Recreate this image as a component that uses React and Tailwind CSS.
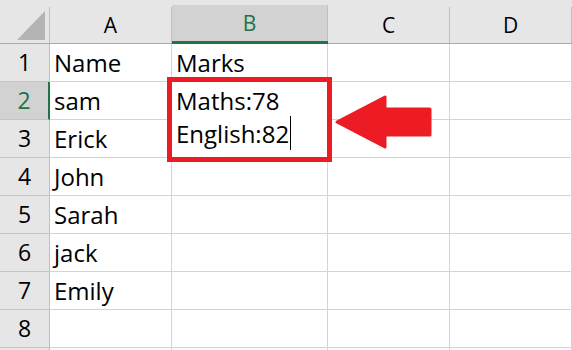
import React from "react";

const columns = [
  { label: "A", width: "w-[122px]" },
  { label: "B", width: "w-[156px]", active: true },
  { label: "C", width: "w-[122px]" },
  { label: "D", width: "flex-1" },
];

// the last row only peeks in at the bottom edge, so its number stays hidden
const rows = [
  { n: 1, a: "Name", b: "Marks" },
  { n: 2, a: "sam", b: "" },
  { n: 3, a: "Erick", b: "" },
  { n: 4, a: "John", b: "" },
  { n: 5, a: "Sarah", b: "" },
  { n: 6, a: "jack", b: "" },
  { n: 7, a: "Emily", b: "" },
  { n: 8, a: "", b: "" },
  { n: "", a: "", b: "" },
];

function CornerCell() {
  return (
    <div className="w-[50px] h-full flex flex-col border-b border-[#ababab]">
      <div className="h-[7px]" />
      <div className="flex-1 border-r border-[#bfbfbf] relative">
        <svg width="49" height="36" className="absolute left-0 top-0">
          <polygon points="17,33 45,33 45,4" fill="#b4b4b4" />
        </svg>
      </div>
    </div>
  );
}

function ColumnHeader({ label, width, active }) {
  return (
    <div
      className={`${width} h-full flex flex-col ${
        active ? "border-b-[3px] border-[#217346]" : "border-b border-[#ababab]"
      }`}
    >
      <div className="h-[7px]" />
      <div
        className={`flex-1 border-r border-[#bfbfbf] text-center text-[21px] leading-[36px] ${
          active ? "bg-[#d2d2d2] text-[#217346]" : "text-black"
        }`}
      >
        {label}
      </div>
    </div>
  );
}

function EditBox() {
  return (
    <div className="absolute left-[167px] top-[77px] w-[165px] h-[85px] border-[5px] border-[#ed1c24] bg-white pl-[4px] pt-[3px] text-[24px] leading-[31px] text-black">
      <div>Maths:78</div>
      <div className="flex items-center">
        <span>English:82</span>
        <span className="ml-[1px] w-px h-[34px] bg-black" />
      </div>
    </div>
  );
}

function Arrow() {
  return (
    <svg width="100" height="58" className="absolute left-[334px] top-[94px]">
      <polygon
        points="3,28 51,3 51,15 96,15 96,41 51,41 51,53"
        fill="#ed1c24"
        stroke="#ed1c24"
        strokeWidth="3"
        strokeLinejoin="round"
      />
    </svg>
  );
}

export default function App() {
  return (
    <div className="relative w-[572px] h-[350px] overflow-hidden bg-white font-['Open_Sans',sans-serif]">
      {/* column letters */}
      <div className="flex h-[44px] bg-[#e6e6e6]">
        <CornerCell />
        {columns.map((c) => (
          <ColumnHeader key={c.label} {...c} />
        ))}
      </div>

      {/* sheet rows */}
      {rows.map((r, i) => {
        const selected = r.n === 2;
        return (
          <div key={i} className="flex h-[38px]">
            <div
              className={`w-[50px] shrink-0 border-b border-[#c6c6c6] text-center text-[23px] leading-[37px] ${
                selected
                  ? "bg-[#d2d2d2] text-[#217346] border-r-2 border-r-[#217346]"
                  : "bg-[#e6e6e6] text-black border-r border-r-[#bfbfbf]"
              }`}
            >
              {r.n}
            </div>
            <div className="w-[122px] shrink-0 border-r border-b border-[#d4d4d4] pl-[4px] text-[24px] leading-[37px] text-black">
              {r.a}
            </div>
            <div className="w-[156px] shrink-0 border-r border-b border-[#d4d4d4] pl-[4px] text-[24px] leading-[37px] text-black">
              {r.b}
            </div>
            <div className="w-[122px] shrink-0 border-r border-b border-[#d4d4d4]" />
            <div className="flex-1 border-r border-b border-[#d4d4d4]" />
          </div>
        );
      })}

      <EditBox />
      <Arrow />
    </div>
  );
}
